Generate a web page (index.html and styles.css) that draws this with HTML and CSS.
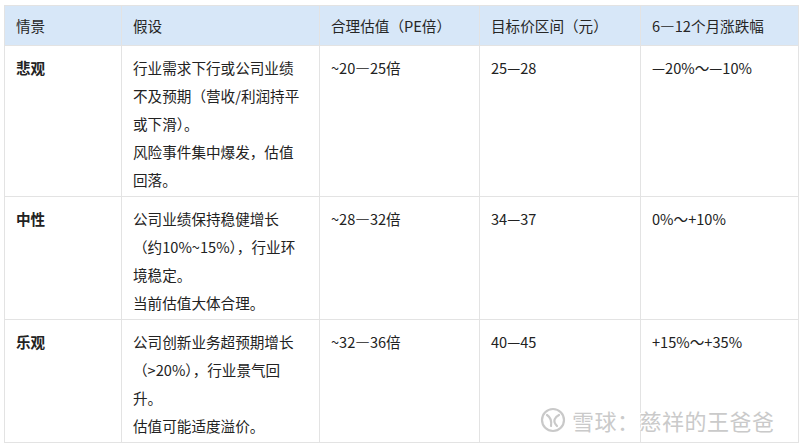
FILE: index.html
```html
<!DOCTYPE html>
<html lang="zh-CN">
<head>
<meta charset="utf-8">
<link rel="stylesheet" href="styles.css">
</head>
<body>
<div class="page">
  <table class="grid">
    <colgroup>
      <col class="c1"><col class="c2"><col class="c3"><col class="c4"><col class="c5">
    </colgroup>
    <thead>
      <tr>
        <th>情景</th>
        <th>假设</th>
        <th>合理估值（PE倍）</th>
        <th>目标价区间（元）</th>
        <th>6—12个月涨跌幅</th>
      </tr>
    </thead>
    <tbody>
      <tr class="r1">
        <td class="label">悲观</td>
        <td><p>行业需求下行或公司业绩不及预期（营收/利润持平或下滑）。</p><p>风险事件集中爆发，估值回落。</p></td>
        <td>~20—25倍</td>
        <td>25—28</td>
        <td>—20%～—10%</td>
      </tr>
      <tr class="r2">
        <td class="label">中性</td>
        <td><p>公司业绩保持稳健增长（约10%~15%），行业环境稳定。</p><p>当前估值大体合理。</p></td>
        <td>~28—32倍</td>
        <td>34—37</td>
        <td>0%～+10%</td>
      </tr>
      <tr class="r3">
        <td class="label">乐观</td>
        <td><p>公司创新业务超预期增长（&gt;20%），行业景气回升。</p><p>估值可能适度溢价。</p></td>
        <td>~32—36倍</td>
        <td>40—45</td>
        <td>+15%～+35%</td>
      </tr>
    </tbody>
  </table>
  <div class="watermark">
    <svg class="logo" width="26" height="26" viewBox="0 0 26 26">
      <circle cx="13" cy="13" r="11" fill="none" stroke="#c9c9c9" stroke-width="2.2"/>
      <path d="M7 8 C10 10 12 13 11 19" fill="none" stroke="#c9c9c9" stroke-width="2.2" stroke-linecap="round"/>
      <path d="M19 8 C15 10 12 14 17 19" fill="none" stroke="#c9c9c9" stroke-width="2.2" stroke-linecap="round"/>
    </svg>
    <span class="wm-text">雪球：慈祥的王爸爸</span>
  </div>
</div>
</body>
</html>
```
FILE: styles.css
```css
html, body {
  margin: 0;
  padding: 0;
  background: #ffffff;
}
.page {
  position: relative;
  width: 800px;
  height: 445px;
  padding: 5px 0 0 4px;
  box-sizing: border-box;
  font-family: "Noto Sans CJK SC", "Noto Sans", sans-serif;
  color: #222222;
}
.grid {
  border-collapse: collapse;
  table-layout: fixed;
  width: 794px;
  font-size: 14.6px;
}
.c1 { width: 117px; }
.c2 { width: 198px; }
.c3 { width: 160px; }
.c4 { width: 161px; }
.c5 { width: 158px; }
.grid th, .grid td {
  border: 1px solid #e3e3e3;
  text-align: left;
  vertical-align: top;
}
.grid th {
  background: #d7e7f8;
  font-weight: normal;
  height: 39px;
  line-height: 39px;
  padding: 0 11px;
  color: #262626;
  vertical-align: middle;
}
.grid td {
  line-height: 28px;
  padding: 8px 11px 2px 11px;
}
.grid td:nth-child(2) {
  padding-right: 16px;
}
.grid td.label {
  font-weight: bold;
}
.grid p {
  margin: 0;
}
.watermark {
  position: absolute;
  left: 540px;
  top: 404px;
  display: flex;
  align-items: center;
  gap: 6px;
}
.wm-text {
  font-size: 22px;
  color: #cacaca;
  letter-spacing: 0.5px;
  text-shadow: 1px 1px 0 #ffffff, -1px -1px 0 #ffffff;
}
```
